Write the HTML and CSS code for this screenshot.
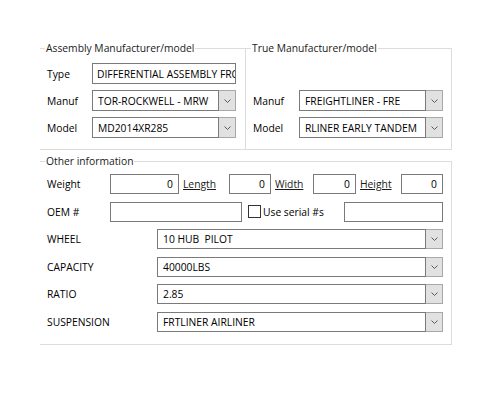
FILE: index.html
```html
<!DOCTYPE html>
<html lang="en">
<head>
<meta charset="utf-8">
<title>Part details</title>
<link rel="stylesheet" href="styles.css">
</head>
<body>
<div class="form">
  <div class="top-row">
    <fieldset class="group group-assembly">
      <legend>Assembly Manufacturer/model</legend>
      <div class="pairs">
        <span class="lbl">Type</span>
        <div class="box box-text"><span class="val">DIFFERENTIAL ASSEMBLY FRONT</span></div>
        <span class="lbl">Manuf</span>
        <div class="combo">
          <div class="combo-text"><span class="val">TOR-ROCKWELL - MRW</span></div>
          <div class="combo-btn"><svg width="7" height="4" viewBox="0 0 7 4"><polyline points="0.5,0.5 3.5,3.5 6.5,0.5" fill="none" stroke="#5a5a5a" stroke-width="1"/></svg></div>
        </div>
        <span class="lbl">Model</span>
        <div class="combo">
          <div class="combo-text"><span class="val">MD2014XR285</span></div>
          <div class="combo-btn"><svg width="7" height="4" viewBox="0 0 7 4"><polyline points="0.5,0.5 3.5,3.5 6.5,0.5" fill="none" stroke="#5a5a5a" stroke-width="1"/></svg></div>
        </div>
      </div>
    </fieldset>
    <fieldset class="group group-true">
      <legend>True Manufacturer/model</legend>
      <div class="pairs pairs-wide">
        <span class="lbl"></span>
        <div class="spacer"></div>
        <span class="lbl">Manuf</span>
        <div class="combo">
          <div class="combo-text"><span class="val">FREIGHTLINER - FRE</span></div>
          <div class="combo-btn"><svg width="7" height="4" viewBox="0 0 7 4"><polyline points="0.5,0.5 3.5,3.5 6.5,0.5" fill="none" stroke="#5a5a5a" stroke-width="1"/></svg></div>
        </div>
        <span class="lbl">Model</span>
        <div class="combo">
          <div class="combo-text"><span class="val">RLINER EARLY TANDEM</span></div>
          <div class="combo-btn"><svg width="7" height="4" viewBox="0 0 7 4"><polyline points="0.5,0.5 3.5,3.5 6.5,0.5" fill="none" stroke="#5a5a5a" stroke-width="1"/></svg></div>
        </div>
      </div>
    </fieldset>
  </div>

  <fieldset class="group group-other">
    <legend>Other information</legend>
    <div class="rows">
      <div class="row">
        <span class="lbl lbl-short">Weight</span>
        <div class="box num w-weight">0</div>
        <a class="dim-link w-length">Length</a>
        <div class="box num w-dim">0</div>
        <a class="dim-link w-width">Width</a>
        <div class="box num w-dim2">0</div>
        <a class="dim-link w-height">Height</a>
        <div class="box num w-dim">0</div>
      </div>
      <div class="row">
        <span class="lbl lbl-short">OEM #</span>
        <div class="box w-oem"></div>
        <span class="check"></span>
        <span class="check-lbl">Use serial #s</span>
        <div class="box w-serial"></div>
      </div>
      <div class="row">
        <span class="lbl lbl-long">WHEEL</span>
        <div class="combo combo-fill">
          <div class="combo-text"><span class="val">10 HUB&nbsp; PILOT</span></div>
          <div class="combo-btn"><svg width="7" height="4" viewBox="0 0 7 4"><polyline points="0.5,0.5 3.5,3.5 6.5,0.5" fill="none" stroke="#5a5a5a" stroke-width="1"/></svg></div>
        </div>
      </div>
      <div class="row">
        <span class="lbl lbl-long">CAPACITY</span>
        <div class="combo combo-fill">
          <div class="combo-text"><span class="val">40000LBS</span></div>
          <div class="combo-btn"><svg width="7" height="4" viewBox="0 0 7 4"><polyline points="0.5,0.5 3.5,3.5 6.5,0.5" fill="none" stroke="#5a5a5a" stroke-width="1"/></svg></div>
        </div>
      </div>
      <div class="row">
        <span class="lbl lbl-long">RATIO</span>
        <div class="combo combo-fill">
          <div class="combo-text"><span class="val">2.85</span></div>
          <div class="combo-btn"><svg width="7" height="4" viewBox="0 0 7 4"><polyline points="0.5,0.5 3.5,3.5 6.5,0.5" fill="none" stroke="#5a5a5a" stroke-width="1"/></svg></div>
        </div>
      </div>
      <div class="row">
        <span class="lbl lbl-long">SUSPENSION</span>
        <div class="combo combo-fill">
          <div class="combo-text"><span class="val">FRTLINER AIRLINER</span></div>
          <div class="combo-btn"><svg width="7" height="4" viewBox="0 0 7 4"><polyline points="0.5,0.5 3.5,3.5 6.5,0.5" fill="none" stroke="#5a5a5a" stroke-width="1"/></svg></div>
        </div>
      </div>
    </div>
  </fieldset>
</div>
</body>
</html>
```
FILE: styles.css
```css
html, body {
  margin: 0;
  padding: 0;
  background: #ffffff;
}

body {
  font-family: "Segoe UI", "Open Sans", "Noto Sans", sans-serif;
  font-size: 10.3px;
  color: #000000;
}

.form {
  width: 412px;
  margin: 41px 0 0 40px;
}

.top-row {
  display: flex;
}

/* group boxes: light frame, no left edge */
.group {
  margin: 0;
  border: 1px solid #dcdcdc;
  border-left: none;
  min-width: 0;
}

.group legend {
  padding: 0 1px;
  margin-left: -2px;
  line-height: 14px;
  color: #1a1a1a;
}

.group-assembly {
  width: 198px;
  flex: none;
  border-right: none;
  padding: 8px 0 11px 7px;
}

.group-true {
  flex: 1;
  border-left: 1px solid #dcdcdc;
  padding: 8px 8px 11px 7px;
}

.group-other {
  margin-top: 4px;
  padding: 6px 8px 12px 7px;
}

/* label / control grid of the top groups */
.pairs {
  display: grid;
  grid-template-columns: 45px 144px;
  grid-auto-rows: 21px;
  row-gap: 6px;
  align-items: center;
}

.pairs-wide {
  grid-template-columns: 46px 144px;
}

.lbl {
  line-height: 14px;
  white-space: nowrap;
}

.spacer {
  height: 21px;
}

.box {
  box-sizing: border-box;
  height: 20px;
  border: 1px solid #7a7a7a;
  background: #ffffff;
  display: flex;
  align-items: center;
  padding: 0 4px;
  overflow: hidden;
  white-space: nowrap;
}

.pairs .box {
  height: 21px;
}

.val {
  white-space: nowrap;
}

.num {
  justify-content: flex-end;
  padding-right: 5px;
}

/* combo box: text area plus grey drop-down button */
.combo {
  display: flex;
  height: 21px;
}

.combo-text {
  flex: 1;
  min-width: 0;
  box-sizing: border-box;
  border: 1px solid #7a7a7a;
  display: flex;
  align-items: center;
  padding: 0 5px;
  overflow: hidden;
}

.combo-btn {
  width: 17px;
  flex: none;
  box-sizing: border-box;
  border: 1px solid #a8a8a8;
  border-left: none;
  background: #e1e1e1;
  display: flex;
  align-items: center;
  justify-content: center;
}

.combo-btn svg {
  display: block;
}

/* other information rows */
.rows {
  display: flex;
  flex-direction: column;
  gap: 7.6px;
}

.row {
  display: flex;
  align-items: center;
  height: 20px;
}

.lbl-short {
  width: 63px;
  flex: none;
}

.lbl-long {
  width: 110px;
  flex: none;
}

.combo-fill {
  flex: 1;
  height: 20px;
}

.w-weight { width: 69px; }
.w-dim { width: 42px; }
.w-dim2 { width: 43px; }
.w-oem { width: 132px; }
.w-serial { width: 99px; }

.dim-link {
  box-sizing: border-box;
  padding-left: 4px;
  text-decoration: underline;
  color: #1a1a1a;
  line-height: 14px;
}

.w-length { width: 50px; }
.w-width { width: 42px; }
.w-height { width: 45px; }

.check {
  box-sizing: border-box;
  width: 13px;
  height: 13px;
  margin-left: 6px;
  border: 1px solid #333333;
  background: #ffffff;
}

.check-lbl {
  width: 83px;
  padding-left: 2px;
  box-sizing: border-box;
  line-height: 14px;
  white-space: nowrap;
}
```
